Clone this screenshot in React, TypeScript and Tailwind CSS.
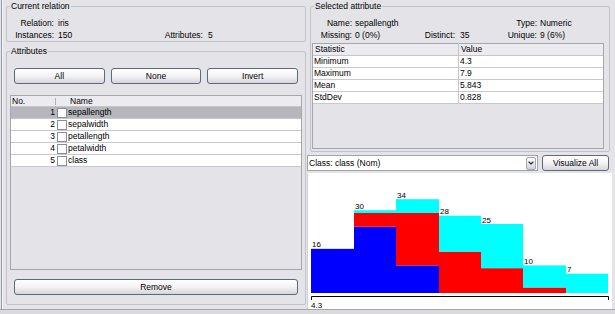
import React from 'react';
import { ChevronDown } from 'lucide-react';

const attributes = ['sepallength', 'sepalwidth', 'petallength', 'petalwidth', 'class'];

const stats = [
  ['Minimum', '4.3'],
  ['Maximum', '7.9'],
  ['Mean', '5.843'],
  ['StdDev', '0.828'],
];

// stacked class counts per bin: setosa (blue), versicolor (red), virginica (cyan)
const bins = [
  { x0: 3, x1: 46, b: 16, r: 0, c: 0 },
  { x0: 46, x1: 88, b: 24, r: 5, c: 1 },
  { x0: 88, x1: 131, b: 10, r: 19, c: 5 },
  { x0: 131, x1: 173, b: 0, r: 15, c: 13 },
  { x0: 173, x1: 215, b: 0, r: 9, c: 16 },
  { x0: 215, x1: 258, b: 0, r: 2, c: 8 },
  { x0: 258, x1: 300, b: 0, r: 0, c: 7 },
];

const BASE = 120;
const SCALE = 2.76;

function XpButton({ children, className = '' }: { children: React.ReactNode; className?: string }) {
  return (
    <button
      className={`h-[16px] rounded-[3px] border border-[#5d6a7a] bg-linear-to-b from-white via-[#f3f3f5] to-[#d5d5db] text-[8.5px] leading-none text-black ${className}`}
    >
      {children}
    </button>
  );
}

function Histogram() {
  return (
    <svg width="305" height="136" className="block">
      {bins.map((bin, i) => {
        const w = bin.x1 - bin.x0;
        const hb = bin.b * SCALE;
        const hr = bin.r * SCALE;
        const hc = bin.c * SCALE;
        const total = bin.b + bin.r + bin.c;
        const top = BASE - hb - hr - hc;
        return (
          <g key={i}>
            {bin.b > 0 && <rect x={bin.x0} y={BASE - hb} width={w} height={hb} fill="#0000ff" />}
            {bin.r > 0 && <rect x={bin.x0} y={BASE - hb - hr} width={w} height={hr} fill="#ff0000" />}
            {bin.c > 0 && <rect x={bin.x0} y={top} width={w} height={hc} fill="#00ffff" />}
            <text x={bin.x0 + 1} y={top - 1.5} fontSize="8" fill="#000" fontFamily="'Liberation Sans', sans-serif">
              {total}
            </text>
          </g>
        );
      })}
      <path d="M3.5 127 V123.5 H300.5 V127" fill="none" stroke="#000" strokeWidth="1" />
      <text x="3" y="135" fontSize="8" fill="#000" fontFamily="'Liberation Sans', sans-serif">
        4.3
      </text>
    </svg>
  );
}

export default function App() {
  return (
    <div className="w-[615px] h-[314px] overflow-hidden bg-[#e4e4e8] font-['Liberation_Sans',sans-serif] text-[8.5px] text-black flex flex-col">
      <div className="flex h-[309px] shrink-0">
        {/* window edge */}
        <div className="w-[6px] shrink-0">
          <div className="ml-[1px] h-full w-[2px] border-l border-[#9c9ca4] bg-[#f4f4f6]" />
        </div>

        {/* left column */}
        <div className="w-[300px] shrink-0 flex flex-col">
          <fieldset className="h-[42px] border border-[#c2c2ca] rounded-[2px]">
            <legend className="ml-[3px] px-[1px] leading-[12px]">Current relation</legend>
            <div className="pt-[5px]">
              <div className="flex h-[12px] items-center">
                <span className="w-[47px] text-right">Relation:</span>
                <span className="ml-[4px]">iris</span>
              </div>
              <div className="flex h-[12px] items-center">
                <span className="w-[47px] text-right">Instances:</span>
                <span className="ml-[4px] w-[101px]">150</span>
                <span className="w-[44px] text-right">Attributes:</span>
                <span className="ml-[5px]">5</span>
              </div>
            </div>
          </fieldset>

          <fieldset className="mt-[3px] h-[260px] border border-[#c2c2ca] rounded-[2px] flex flex-col">
            <legend className="ml-[3px] px-[1px] leading-[12px]">Attributes</legend>
            <div className="mt-[11px] px-[7px] grid grid-cols-3 gap-[6px]">
              <XpButton>All</XpButton>
              <XpButton>None</XpButton>
              <XpButton>Invert</XpButton>
            </div>

            <div className="mt-[11px] mx-[3px] h-[175px] border border-[#a6a6ae] bg-[#e4e4e8]">
              <div className="flex h-[11px] items-center bg-[#ececf0] border-b border-[#c4c4cc]">
                <span className="w-[44px] pl-[1px]">No.</span>
                <span className="h-[7px] w-px bg-[#b0b0b8]" />
                <span className="ml-[14px]">Name</span>
              </div>
              {attributes.map((name, i) => (
                <div
                  key={name}
                  className={`flex h-[12px] items-center border-b border-[#c8c8d0] ${i === 0 ? 'bg-[#b6b6be]' : 'bg-white'}`}
                >
                  <span className="w-[44px] text-right">{i + 1}</span>
                  <span className="ml-[2px] h-[10px] w-[10px] border border-[#8d8d97] bg-white" />
                  <span className="ml-[1px]">{name}</span>
                </div>
              ))}
            </div>

            <div className="mt-[9px] px-[7px]">
              <XpButton className="w-full">Remove</XpButton>
            </div>
          </fieldset>
        </div>

        {/* right column */}
        <div className="ml-[1px] w-[305px] shrink-0 flex flex-col">
          <fieldset className="ml-[3px] w-[300px] h-[153px] border border-[#c2c2ca] rounded-[2px] flex flex-col">
            <legend className="ml-[3px] px-[1px] leading-[12px]">Selected attribute</legend>
            <div className="pt-[5px]">
              <div className="flex h-[12px] items-center">
                <span className="w-[41px] text-right">Name:</span>
                <span className="ml-[3px] w-[140px]">sepallength</span>
                <span className="w-[42px] text-right">Type:</span>
                <span className="ml-[3px]">Numeric</span>
              </div>
              <div className="flex h-[12px] items-center">
                <span className="w-[41px] text-right">Missing:</span>
                <span className="ml-[3px] w-[60px]">0 (0%)</span>
                <span className="w-[40px] text-right">Distinct:</span>
                <span className="ml-[5px] w-[42px]">35</span>
                <span className="w-[35px] text-right">Unique:</span>
                <span className="ml-[3px]">9 (6%)</span>
              </div>
            </div>

            <div className="mt-[2px] ml-[1px] mr-[5px] h-[106px] border border-[#a6a6ae] bg-[#e4e4e8]">
              <div className="flex h-[12px] items-center bg-[#ececf0] border-b border-[#c4c4cc]">
                <span className="w-[146px] pl-[2px] border-r border-[#c4c4cc]">Statistic</span>
                <span className="pl-[2px]">Value</span>
              </div>
              {stats.map(([k, v]) => (
                <div key={k} className="flex h-[12px] items-center bg-white border-b border-[#c8c8d0]">
                  <span className="w-[146px] h-full flex items-center pl-[1px] border-r border-[#c8c8d0]">{k}</span>
                  <span className="pl-[1px]">{v}</span>
                </div>
              ))}
            </div>
          </fieldset>

          <div className="mt-[3px] flex h-[16px]">
            <div className="w-[231px] flex items-center border border-[#9ea4ac] bg-white">
              <span className="flex-1 pl-[1px]">Class: class (Nom)</span>
              <span className="mr-px flex h-[13px] w-[10px] items-center justify-center rounded-[2px] border border-[#a4a8b0] bg-linear-to-b from-white to-[#d2d2d8]">
                <ChevronDown size={8} strokeWidth={3.5} color="#2a2a3a" />
              </span>
            </div>
            <XpButton className="ml-[4px] w-[67px]">Visualize All</XpButton>
          </div>

          <div className="mt-[2px] h-[136px] w-[305px] bg-white border-l border-[#d0d0d6]">
            <Histogram />
          </div>
        </div>
      </div>

      <div className="flex-1 border-t border-[#a4a4ac] bg-[#dadade]" />
    </div>
  );
}
